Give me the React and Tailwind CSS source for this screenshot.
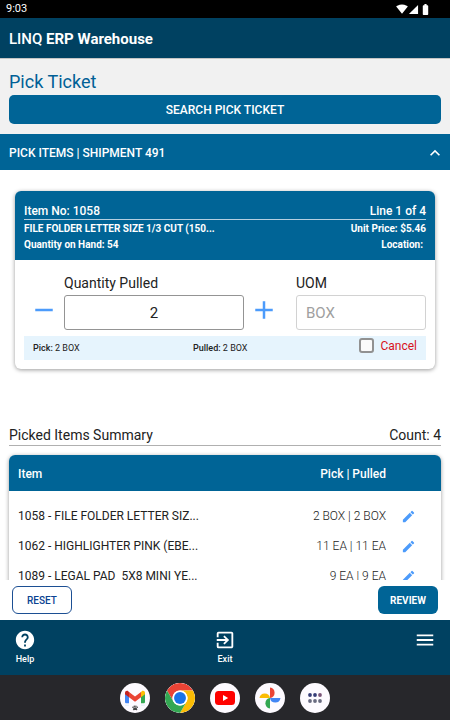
import React, { useState } from "react";
import {
    MdAdd,
    MdBatteryFull,
    MdEdit,
    MdExitToApp,
    MdHelp,
    MdKeyboardArrowUp,
    MdMenu,
    MdRemove,
    MdSignalCellular4Bar,
    MdSignalWifi4Bar,
} from "react-icons/md";

const PICKED_ITEMS = [
    { id: 1058, name: "FILE FOLDER LETTER SIZ...", pick: "2 BOX", pulled: "2 BOX" },
    { id: 1062, name: "HIGHLIGHTER PINK (EBE...", pick: "11 EA", pulled: "11 EA" },
    { id: 1089, name: "LEGAL PAD  5X8 MINI YE...", pick: "9 EA", pulled: "9 EA" },
];

function GmailLogo() {
    return (
        <svg viewBox="0 0 30 30" className="size-full">
            <path d="M5 10.5v8.4c0 .9.6 1.4 1.4 1.4H9v-7z" fill="#4285f4" />
            <path d="M25 10.5v8.4c0 .9-.6 1.4-1.4 1.4H21v-7z" fill="#34a853" />
            <path d="M21 9.3v5l4-3v-1.4c0-1.9-2-2.7-3.3-1.6z" fill="#fbbc04" />
            <path d="M9 9.3v5l-4-3V9.9c0-1.9 2-2.7 3.3-1.6z" fill="#c5221f" />
            <path d="M9 8.9l6 4.5 6-4.5v5.3l-6 4.5-6-4.5z" fill="#ea4335" />
            <path d="M5 21.5h4v1.5H5zM21 21.5h4v1.5h-4z" fill="#eaf2fb" />
            <g fill="#444">
                <circle cx="13" cy="24.3" r=".8" />
                <circle cx="14.3" cy="23.2" r=".8" />
                <circle cx="15.9" cy="23.2" r=".8" />
                <circle cx="17.2" cy="24.3" r=".8" />
                <path d="M15.1 24.2c1 0 2.2 1.3 2.2 2.2 0 1-1.3.7-2.2.7s-2.2.3-2.2-.7c0-.9 1.2-2.2 2.2-2.2z" />
            </g>
        </svg>
    );
}

function ChromeLogo() {
    return (
        <svg viewBox="0 0 48 48" className="size-full">
            <circle cx="24" cy="24" r="24" fill="#fff" />
            <path d="M3.2 12a24 24 0 0 1 41.6 0H24a12 12 0 0 0-10.4 18z" fill="#ea4335" />
            <path d="M44.8 12A24 24 0 0 1 24 48l10.4-18A12 12 0 0 0 24 12z" fill="#fbbc04" />
            <path d="M24 48A24 24 0 0 1 3.2 12l10.4 18a12 12 0 0 0 20.8 0z" fill="#34a853" />
            <circle cx="24" cy="24" r="12" fill="#fff" />
            <circle cx="24" cy="24" r="9.5" fill="#1a73e8" />
        </svg>
    );
}

function YouTubeLogo() {
    return (
        <svg viewBox="0 0 30 30" className="size-full">
            <rect x="5" y="8" width="20" height="14" rx="3.5" fill="#f00" />
            <path d="M13 12v6l5.2-3z" fill="#fff" />
        </svg>
    );
}

function PhotosLogo() {
    return (
        <svg viewBox="0 0 30 30" className="size-full">
            <path d="M15 4.5a5.3 5.3 0 0 1 0 10.5z" fill="#ea4335" />
            <path d="M25.5 15a5.3 5.3 0 0 1-10.5 0z" fill="#4285f4" />
            <path d="M15 25.5A5.3 5.3 0 0 1 15 15z" fill="#34a853" />
            <path d="M4.5 15A5.3 5.3 0 0 1 15 15z" fill="#fbbc04" />
        </svg>
    );
}

function AllAppsLogo() {
    return (
        <svg viewBox="0 0 30 30" className="size-full">
            <circle cx="10" cy="12" r="1.9" fill="#353c78" />
            <circle cx="15" cy="12" r="1.9" fill="#353c78" />
            <circle cx="20" cy="12" r="1.9" fill="#7b5478" />
            <circle cx="10" cy="18" r="1.9" fill="#686a80" />
            <circle cx="15" cy="18" r="1.9" fill="#686a80" />
            <circle cx="20" cy="18" r="1.9" fill="#686a80" />
        </svg>
    );
}

const DOCK_APPS = [
    { name: "Gmail", Logo: GmailLogo },
    { name: "Chrome", Logo: ChromeLogo },
    { name: "YouTube", Logo: YouTubeLogo },
    { name: "Photos", Logo: PhotosLogo },
    { name: "All apps", Logo: AllAppsLogo },
];

function PickCard() {
    const [quantity, setQuantity] = useState(2);
    const [cancelled, setCancelled] = useState(false);

    return (
        <section className="mx-[15px] mt-[21px] overflow-hidden rounded-md bg-white shadow-[0_1px_4px_rgba(0,0,0,0.4)]">
            <div className="bg-[#006496] px-[9px] pt-3 pb-[7px] text-white">
                <div className="mb-px flex justify-between border-b border-[#b5cfe0] text-xs leading-4 font-medium">
                    <h3>Item No: 1058</h3>
                    <span>Line 1 of 4</span>
                </div>
                <div className="flex justify-between text-[10px] leading-4 font-bold">
                    <span>FILE FOLDER LETTER SIZE 1/3 CUT (150...</span>
                    <span>Unit Price: $5.46</span>
                </div>
                <div className="flex justify-between text-[10px] leading-4 font-bold">
                    <span>Quantity on Hand: 54</span>
                    <span className="pr-[3px]">Location:</span>
                </div>
            </div>

            <div className="px-[9px] pt-[13px] pb-[9px]">
                <div className="flex items-end">
                    <button
                        type="button"
                        aria-label="Decrease quantity"
                        onClick={() => setQuantity(Math.max(0, quantity - 1))}
                        className="flex h-10 w-10 items-center justify-center text-[#4c9bfb]"
                    >
                        <MdRemove size={30} />
                    </button>
                    <div className="min-w-0 flex-1">
                        <label htmlFor="quantity" className="block h-[22px] text-sm leading-5 text-[#222]">
                            Quantity Pulled
                        </label>
                        <input
                            id="quantity"
                            inputMode="numeric"
                            value={quantity}
                            onChange={(e) => setQuantity(Number(e.target.value) || 0)}
                            className="block h-[35px] w-full rounded-[3px] border border-[#949494] text-center text-[15px] text-[#222]"
                        />
                    </div>
                    <button
                        type="button"
                        aria-label="Increase quantity"
                        onClick={() => setQuantity(quantity + 1)}
                        className="flex h-10 w-10 items-center justify-center text-[#4c9bfb]"
                    >
                        <MdAdd size={30} />
                    </button>
                    <div className="ml-3 w-[130px]">
                        <label htmlFor="uom" className="block h-[22px] text-sm leading-5 text-[#222]">
                            UOM
                        </label>
                        <input
                            id="uom"
                            value="BOX"
                            disabled
                            className="block h-[35px] w-full rounded-[3px] border border-[#d2d2d2] px-[9px] text-[15px] text-[#a0a0a0]"
                        />
                    </div>
                </div>

                <div className="mt-1.5 flex h-6 bg-[#e6f4fd] px-[9px] text-[9px] leading-6 text-[#222]">
                    <span className="w-40">
                        <span className="font-medium">Pick:</span> 2 BOX
                    </span>
                    <span className="flex-1">
                        <span className="font-medium">Pulled:</span> 2 BOX
                    </span>
                    <label className="flex h-[19px] items-center gap-1.5 text-xs text-[#d8121c]">
                        <input
                            type="checkbox"
                            checked={cancelled}
                            onChange={(e) => setCancelled(e.target.checked)}
                            className="size-[15px] appearance-none rounded-[3px] border-2 border-[#919191] bg-[#fafafa] checked:bg-[#006496]"
                        />
                        Cancel
                    </label>
                </div>
            </div>
        </section>
    );
}

function PickedSummary() {
    return (
        <section className="mx-[9px] mt-[57px]">
            <div className="flex justify-between border-b border-[#b0b0b0] text-sm leading-[19px] text-[#222]">
                <h3>Picked Items Summary</h3>
                <span>Count: 4</span>
            </div>
            <div className="mt-[9px] overflow-hidden rounded-t-md shadow-[0_1px_4px_rgba(0,0,0,0.4)]">
                <table className="w-full">
                    <thead>
                        <tr className="h-9 bg-[#006496] text-xs text-white">
                            <th className="pt-0.5 pl-[9px] text-left font-medium">Item</th>
                            <th className="pt-0.5 text-right font-medium">Pick | Pulled</th>
                            <th className="w-[55px]" aria-label="Edit" />
                        </tr>
                    </thead>
                    <tbody className="before:block before:h-2.5">
                        {PICKED_ITEMS.map((item) => (
                            <tr key={item.id} className="h-[30px] text-xs text-[#222]">
                                <td className="pl-[9px] whitespace-pre">
                                    {item.id} - {item.name}
                                </td>
                                <td className="text-right font-light">
                                    {item.pick} | {item.pulled}
                                </td>
                                <td className="w-[55px] pl-[15px]">
                                    <button type="button" aria-label={`Edit ${item.id}`} className="block text-[#4c9bfb]">
                                        <MdEdit size={15} />
                                    </button>
                                </td>
                            </tr>
                        ))}
                    </tbody>
                </table>
            </div>
        </section>
    );
}

export default function App() {
    return (
        <div className="flex h-screen flex-col overflow-hidden bg-white font-[Roboto,sans-serif]">
            {/* System status bar */}
            <div className="flex h-[18px] shrink-0 items-center justify-between bg-black pr-[18px] pl-1.5 text-[11px] leading-[18px] text-white">
                <span>9:03</span>
                <div className="flex items-center">
                    <MdSignalWifi4Bar size={12} />
                    <MdSignalCellular4Bar size={11} />
                    <MdBatteryFull size={13} />
                </div>
            </div>

            <header className="flex h-10 shrink-0 items-center bg-[#004161] px-[9px] pt-0.5">
                <h1 className="text-[15px] leading-5 text-white">
                    <span className="font-medium">LINQ</span> <span className="font-bold">ERP Warehouse</span>
                </h1>
            </header>

            <div className="shrink-0 border-t border-[#c4c4c4] bg-[#f1f1f1] px-[9px] pt-[11px] pb-2.5">
                <h2 className="mb-px text-lg leading-6 text-[#006096]">Pick Ticket</h2>
                <button
                    type="button"
                    className="block h-[29px] w-full rounded-[5px] bg-[#006496] text-xs font-medium text-white"
                >
                    SEARCH PICK TICKET
                </button>
            </div>

            <button
                type="button"
                aria-expanded="true"
                className="flex h-9 shrink-0 items-center justify-between bg-[#006496] pt-px pr-[5px] pl-[9px] text-xs font-medium text-white"
            >
                PICK ITEMS | SHIPMENT 491
                <MdKeyboardArrowUp size={20} />
            </button>

            <main className="min-h-0 flex-1 overflow-y-auto [scrollbar-width:none]">
                <PickCard />
                <PickedSummary />
            </main>

            <div className="flex shrink-0 justify-between px-3 py-1.5">
                <button
                    type="button"
                    className="h-7 w-[60px] rounded-md border border-[#1c4f93] bg-white text-[10px] font-medium text-[#0b4392]"
                >
                    RESET
                </button>
                <button type="button" className="h-7 w-[60px] rounded-md bg-[#006496] text-[10px] font-bold text-white">
                    REVIEW
                </button>
            </div>

            <nav className="grid h-[55px] shrink-0 grid-cols-3 items-start bg-[#004161] px-[14px] pt-[9px] text-[9px] leading-3 font-medium text-white">
                <button type="button" className="flex flex-col items-center gap-0.5 justify-self-start">
                    <MdHelp size={22} />
                    Help
                </button>
                <button type="button" className="flex flex-col items-center gap-0.5 justify-self-center">
                    <MdExitToApp size={22} />
                    Exit
                </button>
                <button type="button" aria-label="Menu" className="justify-self-end">
                    <MdMenu size={22} />
                </button>
            </nav>

            {/* App dock */}
            <div className="flex h-[45px] shrink-0 items-center justify-center gap-[15px] bg-[#27272b]">
                {DOCK_APPS.map(({ name, Logo }) => (
                    <button
                        key={name}
                        type="button"
                        aria-label={name}
                        className="size-[30px] overflow-hidden rounded-full bg-[#fdfaff]"
                    >
                        <Logo />
                    </button>
                ))}
            </div>
        </div>
    );
}
